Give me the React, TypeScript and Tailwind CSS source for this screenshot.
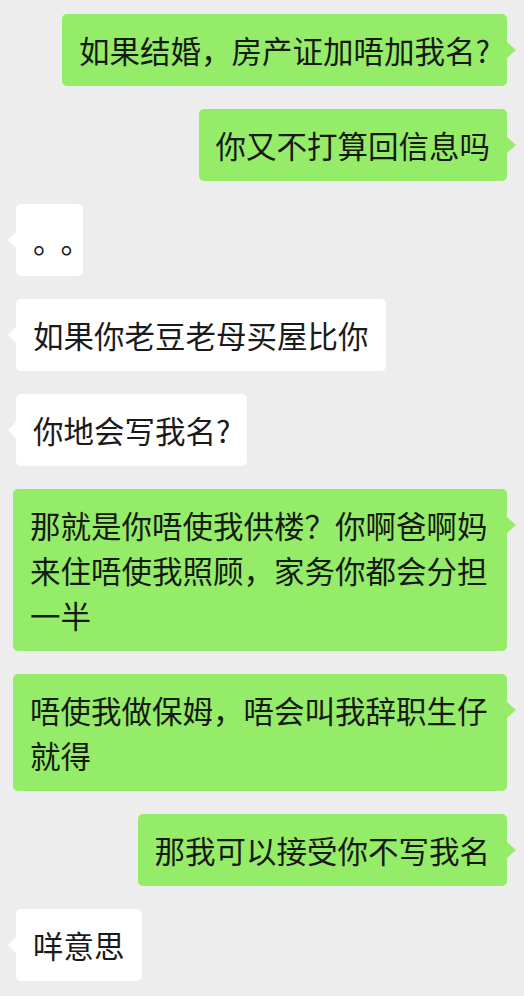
import React from 'react';

// 聊天记录
interface Message {
    id: number;
    mine: boolean;
    text: string;
    extra?: string;
}

const messages: Message[] = [
    { id: 1, mine: true, text: '如果结婚，房产证加唔加我名?' },
    { id: 2, mine: true, text: '你又不打算回信息吗' },
    { id: 3, mine: false, text: '。。', extra: 'w-[67px] tracking-[-3px] whitespace-nowrap [text-spacing-trim:space-all]' },
    { id: 4, mine: false, text: '如果你老豆老母买屋比你' },
    { id: 5, mine: false, text: '你地会写我名?' },
    { id: 6, mine: true, text: '那就是你唔使我供楼？你啊爸啊妈来住唔使我照顾，家务你都会分担一半' },
    { id: 7, mine: true, text: '唔使我做保姆，唔会叫我辞职生仔就得' },
    { id: 8, mine: true, text: '那我可以接受你不写我名' },
    { id: 9, mine: false, text: '咩意思' },
];

function Bubble({ msg }: { msg: Message }) {
    const tone = msg.mine ? 'bg-[#95ec69] text-[#161a13]' : 'bg-white text-[#1a1a1a]';
    return (
        <div className={`flex ${msg.mine ? 'justify-end' : 'justify-start'}`}>
            <div
                className={`relative max-w-[494px] rounded-[5px] px-[17px] pt-[14px] pb-[13px] text-[30.5px] leading-[45px] ${tone} ${msg.extra ?? ''}`}
            >
                {/* 小三角 */}
                {msg.mine ? (
                    <span className="absolute right-[-9px] top-[28px] h-0 w-0 border-y-[8px] border-l-[9px] border-y-transparent border-l-[#95ec69]" />
                ) : (
                    <span className="absolute left-[-8px] top-[28px] h-0 w-0 border-y-[8px] border-r-[8px] border-y-transparent border-r-white" />
                )}
                {msg.text}
            </div>
        </div>
    );
}

export default function App() {
    return (
        <div
            className="min-h-[996px] w-full bg-[#ededed] pl-[16px] pr-[17px] pt-[14px] pb-[15px]"
            style={{ fontFamily: '"Noto Sans CJK SC", "Noto Sans", sans-serif' }}
        >
            <div className="flex flex-col gap-[23px]">
                {messages.map((m) => (
                    <div key={m.id} className={m.id === 6 || m.id === 7 ? '-ml-[3px]' : ''}>
                        <Bubble msg={m} />
                    </div>
                ))}
            </div>
        </div>
    );
}
